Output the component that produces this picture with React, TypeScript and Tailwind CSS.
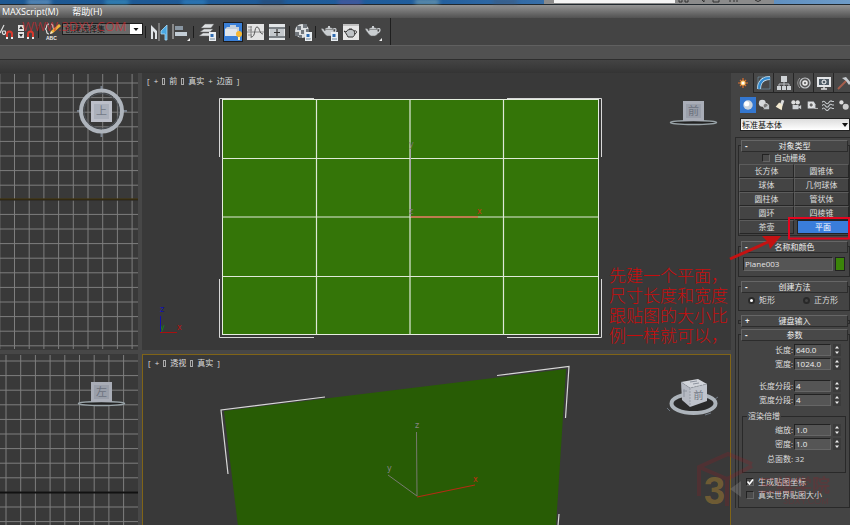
import { useState } from "react";
import type { ReactNode } from "react";

const range = (n: number) => Array.from({ length: n }, (_, i) => i);

/* ---------- toolbar ---------- */

function Tool({ label, children, active = false }: { label: string; children: ReactNode; active?: boolean }) {
  return (
    <button
      aria-label={label}
      className={
        active
          ? "flex h-5 w-5 shrink-0 items-center justify-center border border-[#1c1c1c] bg-[#3a80d8]"
          : "flex h-5 w-5 shrink-0 items-center justify-center"
      }
    >
      <svg viewBox="0 0 18 18" className="h-[18px] w-[18px] shrink-0">
        {children}
      </svg>
    </button>
  );
}

const Sep = () => <span className="mr-[3px] ml-[2px] h-3 w-px shrink-0 bg-[#1d1d1d]" />;

const Corner = () => <path d="M18 15v3h-3z" fill="#eee" />;

const Magnet = () => (
  <>
    <path d="M11 15v-4a2.500 2.500 0 0 1 5 0v4" fill="none" stroke="#d8382c" strokeWidth="2" />
    <path d="M10 14h2v2h-2zM15 14h2v2h-2z" fill="#eee" />
  </>
);

const Teapot = () => (
  <>
    <path d="M5 6c0-2 8-2 8 0 2 3 1 6-2 7H7C5 12 3 9 1 6c2-1 3 0 4 2z" fill="#c9cdd0" stroke="#555" strokeWidth=".5" />
    <path d="M13 6c4-2 4 3 0 4" fill="none" stroke="#c9cdd0" strokeWidth="1.2" />
    <path d="M8 3h2v2H8z" fill="#c9cdd0" />
    <path d="M5 6.500h8" stroke="#666" strokeWidth=".6" />
  </>
);

const Page = () => (
  <>
    <path d="M11 9h7v9h-7z" fill="#e9eef2" />
    <path d="M12.500 11h3v3h-3z" fill="#2f6cb2" />
    <path d="M12 16h5" stroke="#789" />
  </>
);

function Toolbar() {
  return (
    <div className="relative flex h-[27px] items-center bg-[#444]">
      <div className="flex h-full items-center border-r border-[#1f1f1f] pr-[7px]">
        <button aria-label="百分比捕捉" className="h-5 w-[14px] shrink-0">
          <svg viewBox="4 0 14 18" className="h-[18px] w-[14px]">
            <path d="M4 10l4-8M7 8a1.500 2 0 1 0 2 0z" fill="none" stroke="#ddd" strokeWidth="1.200" />
            <Magnet />
          </svg>
        </button>
        <span className="w-[2px]" />
        <Tool label="微调器捕捉">
          <path d="M1 2h6v6H1zM1 9h6v6H1z" fill="#e2e2e2" />
          <path d="M2 6l2-3 2 3zM2 11l2 3 2-3z" fill="#333" />
          <Magnet />
        </Tool>
        <Sep />
        <Tool label="编辑命名选择集">
          <path d="M6 1C2 1 5 6 2 6c3 0 0 5 4 5M8 1c3 0 1 4 3 5" fill="none" stroke="#ddd" strokeWidth="1.200" />
          <path d="M7 11l1-3 8-7 2 2-8 7z" fill="#efb43b" />
          <path d="M7 11l1-3 2 2z" fill="#f5e8cf" />
          <text x="3" y="17" fontSize="5" fontWeight="700" fill="#eee" fontFamily="Liberation Sans, sans-serif">ABC</text>
        </Tool>
        <div className="relative -mt-[5px] h-3 w-[81px] shrink-0 border border-[#1c1c1c] bg-[#6a6a6a]">
          <select
            aria-label="命名选择集"
            className="block h-full w-full appearance-none bg-transparent pl-[2px] text-[8px] leading-[10px] text-[#111] outline-none"
          >
            <option>创建选择集</option>
          </select>
          <svg viewBox="0 0 12 10" className="pointer-events-none absolute top-0 right-0 h-[10px] w-3 bg-white">
            <path d="M3.500 4h5L6 7z" fill="#111" />
          </svg>
        </div>
        <Sep />
        <Tool label="镜像">
          <path d="M1 2l6 6v8H5V10L3 8v8H1z" fill="#dfe3e6" />
          <path d="M9 0v18" stroke="#aaa" />
          <path d="M17 2l-6 6v3h4v6h2z" fill="#4aa8e4" stroke="#a8daf6" strokeWidth=".8" />
        </Tool>
        <span className="w-[2px]" />
        <Tool label="对齐">
          <path d="M1 1v15" stroke="#ccc" />
          <path d="M3 3h8v4H3z" fill="#8996a2" />
          <path d="M3 9h12v4H3z" fill="#c3cdd6" />
          <Corner />
        </Tool>
        <Sep />
        <Tool label="层管理器">
          <path d="M1 13l4-3h9l-3 3zM2 9l4-3h9l-3 3zM3 5l4-4h9l-3 4z" fill="#dde0e2" stroke="#666" strokeWidth=".5" />
          <Page />
        </Tool>
        <Sep />
        <Tool label="石墨建模工具" active>
          <path d="M1 6l2-2h3V2h6v2h3v9H1z" fill="#c4cfda" />
          <path d="M1 6h12v7H1z" fill="#e1e6eb" />
          <circle cx="15" cy="11" r="3" fill="#f7b731" />
          <path d="M14 14h2v3h-2z" fill="#fff2bd" />
        </Tool>
        <span className="w-[2px]" />
        <Tool label="曲线编辑器">
          <path d="M1 1h17v16H1z" fill="#e4e4e4" />
          <path d="M1 9h17M5 3v12M2 4h4M2 7h4M2 12h4" stroke="#777" strokeWidth=".8" />
          <path d="M5 14C10 14 8 4 11 4s2 7 6 7" fill="none" stroke="#555" />
        </Tool>
        <span className="w-[2px]" />
        <Tool label="图解视图">
          <path d="M1 1h16v16H1z" fill="#e2e5e7" />
          <path d="M1 4h16v2H1zM1 13h16v2H1z" fill="#7b8186" />
          <path d="M2 6h14v7H2z" fill="#c4c9cd" />
          <path d="M9 6v7M6 9.500h6" stroke="#333" strokeWidth="1.200" />
        </Tool>
        <Sep />
        <Tool label="材质编辑器">
          <circle cx="8" cy="8" r="7" fill="#dcdfe1" />
          <path d="M3 3h4v4H3zM9 1h4v4H9zM1 9h4v4H1zM7 7h3v4H7zM12 6h3v4h-3zM5 12h3v3H5z" fill="#71777d" />
          <Page />
          <Corner />
        </Tool>
        <Sep />
        <Tool label="渲染设置">
          <Teapot />
          <Page />
        </Tool>
        <span className="w-[2px]" />
        <Tool label="渲染帧窗口">
          <path d="M1 1h16v16H1z" fill="#e6e6e6" />
          <path d="M1 2h16" stroke="#999" />
          <path d="M5 8c0-2 7-2 7 0 2 3 0 5-1 6H6C5 12 4 10 2 8l2 1z" fill="#bfc3c6" stroke="#333" />
          <path d="M12 8c4-1 3 3 0 3M7 6h3" fill="none" stroke="#333" />
        </Tool>
        <span className="w-[2px]" />
        <Tool label="渲染产品">
          <Teapot />
          <Corner />
        </Tool>
      </div>
      <span className="pointer-events-none absolute top-0 left-[22px] text-[13px] leading-4 text-[#d8262c]/65">
        WWW.3DXY.COM
      </span>
    </div>
  );
}

/* ---------- viewports ---------- */

function ViewLabel({ parts }: { parts: string[] }) {
  return (
    <div className="absolute top-[3px] left-[5px] flex gap-1 text-[8px] leading-[10px] text-[#ddd]">
      {parts.map((p, i) =>
        p === "box" ? (
          <span key={i} className="mt-[2px] h-[7px] w-[3px] border border-[#aaa]" />
        ) : (
          <span key={i}>{p}</span>
        ),
      )}
    </div>
  );
}

function FlatCube({ x, y, label }: { x: number; y: number; label: string }) {
  return (
    <g>
      <ellipse cx={x + 10.5} cy={y + 21.5} rx="23" ry="2" fill="#222" stroke="#9aa4a9" strokeWidth="1.500" />
      <rect x={x} y={y} width="21" height="20" fill="#a9adb7" />
      <rect x={x + 3} y={y + 3} width="15" height="14" fill="#9a9faa" />
      <text x={x + 10.5} y={y + 14} fontSize="11" textAnchor="middle" fill="#6c727e">
        {label}
      </text>
    </g>
  );
}

function TopView() {
  return (
    <div className="relative overflow-hidden bg-[#393939]">
      <svg viewBox="0 73 138 277" preserveAspectRatio="xMinYMin slice" className="absolute inset-0 h-full w-full">
        <g stroke="#7e7e7e">
          {range(10).map((i) => (
            <path key={i} d={`M${-0.2 + i * 14.7} 74V349`} />
          ))}
          {range(19).map((i) => (
            <path key={i} d={`M0 ${83 + i * 14.6}H138`} />
          ))}
        </g>
        <path d="M0 199.500H138" stroke="#16130a" strokeWidth="2" />
        <path d="M0 199H138" stroke="#6a571c" strokeWidth=".7" />
        <g stroke="#78818d" strokeWidth="2">
          <path d="M101.500 86v5M101.500 132v5M77 111h5M122 111h5" />
        </g>
        <circle cx="101.500" cy="111" r="20.500" fill="none" stroke="#aeb4bc" strokeWidth="4" />
        <circle cx="101.500" cy="111" r="17.500" fill="none" stroke="#4e545c" />
        <rect x="91" y="101" width="21" height="21" fill="#bcbfc9" />
        <rect x="94" y="104" width="15" height="15" fill="#abb0bb" />
        <text x="101.500" y="115" fontSize="11" textAnchor="middle" fill="#737986">上</text>
      </svg>
    </div>
  );
}

function LeftView() {
  return (
    <div className="relative overflow-hidden bg-[#393939]">
      <svg viewBox="0 354 138 171" preserveAspectRatio="xMinYMin slice" className="absolute inset-0 h-full w-full">
        <g stroke="#7e7e7e">
          {range(9).map((i) => (
            <path key={i} d={`M${6 + i * 14.7} 355V525`} />
          ))}
          {range(12).map((i) => (
            <path key={i} d={`M0 ${361 + i * 14.6}H138`} />
          ))}
        </g>
        <path d="M0 492.500H138" stroke="#111" strokeWidth="2" />
        <FlatCube x={91} y={382} label="左" />
      </svg>
    </div>
  );
}

function FrontView() {
  return (
    <div className="relative overflow-hidden bg-[#393939]">
      <svg viewBox="142 73 589 277" preserveAspectRatio="xMinYMin meet" className="absolute inset-0 h-full w-full">
        <path
          d="M314 98.500H219.500V157M507 98.500H601.500V157M219.500 279V337.500H314M507 337.500H601.500V279"
          fill="none"
          stroke="#d8d8d8"
        />
        <rect x="222.500" y="99.500" width="376" height="235" fill="#347508" stroke="#e6efe0" />
        <path
          d="M316.500 100V335M410 100V335M503.500 100V335M222 158.500H598M222 217H598M222 276.500H598"
          stroke="#dfe9d8"
          strokeWidth="1.200"
        />
        <path d="M410.500 149V217" stroke="#a4a4a4" />
        <path d="M411 217H478" stroke="#cf6a45" strokeWidth="1.500" />
        <g fontSize="8" fontFamily="DejaVu Sans, sans-serif">
          <text x="409" y="147" fill="#777">y</text>
          <text x="409" y="214" fill="#777">z</text>
          <text x="477" y="214" fill="#c93415">x</text>
          <text x="160" y="312" fill="#1010b0">z</text>
          <text x="160" y="330" fill="#128a12">y</text>
          <text x="177" y="330" fill="#b81313">x</text>
        </g>
        <path d="M160.500 316V333" stroke="#1010b0" />
        <path d="M160 332.500H177" stroke="#a81010" />
        <FlatCube x={683} y={101} label="前" />
      </svg>
      <ViewLabel parts={["[", "+", "box", "前", "box", "真实", "+", "边面", "]"]} />
      <p className="absolute right-[2px] bottom-[4px] w-[120px] text-[17px] leading-5 font-light text-[#c80d0d]">
        先建一个平面，
        <br />
        尺寸长度和宽度
        <br />
        跟贴图的大小比
        <br />
        例一样就可以，
      </p>
    </div>
  );
}

function PerspectiveView() {
  return (
    <div className="relative overflow-hidden border border-b-0 border-[#806417] bg-[#393939]">
      <svg viewBox="143 355 587 170" preserveAspectRatio="xMinYMin meet" className="absolute inset-0 h-full w-full">
        <path d="M224 411L566 369L556 526H238Z" fill="#285c05" />
        <path
          d="M325 397L221 410L228 474M497 375.500L569 366.500L565.500 418M559 514L558 526"
          fill="none"
          stroke="#d8d8d8"
          strokeWidth="1.200"
        />
        <path d="M416.500 432L417 496L388 475" fill="none" stroke="#777a70" />
        <path d="M417 497L475 485" stroke="#b52c14" strokeWidth="1.200" />
        <g fontSize="8" fontFamily="DejaVu Sans, sans-serif">
          <text x="415" y="428" fill="#858585">z</text>
          <text x="387" y="471" fill="#858585">y</text>
          <text x="473" y="482" fill="#c62c14">x</text>
        </g>
        <ellipse cx="693.500" cy="403.500" rx="22" ry="9.500" fill="#2b2b2b" stroke="#adb4bb" strokeWidth="4" />
        <path d="M667 408l3 3M705 415l6-2M715 399l3-2" stroke="#6f7883" />
        <path d="M681 382L698 379L707 384L690 388Z" fill="#d2d5db" />
        <path d="M681 382L690 388V407L682 400Z" fill="#b6bac3" />
        <path d="M690 388L707 384V401L690 407Z" fill="#c0c4cc" />
        <path d="M681 382L690 388L707 384M690 388V407" fill="none" stroke="#8a9099" strokeDasharray="2 1" strokeWidth=".7" />
        <path d="M684 389v8M683 391h4M690 382l7-1M693 384l6-1" stroke="#8d939e" />
        <text x="698.500" y="399" fontSize="10" textAnchor="middle" fill="#737986">前</text>
      </svg>
      <ViewLabel parts={["[", "+", "box", "透视", "box", "真实", "]"]} />
    </div>
  );
}

/* ---------- command panel ---------- */

function Rollout({ title, open = true, children, className = "" }: { title: string; open?: boolean; children?: ReactNode; className?: string }) {
  return (
    <section className={`border border-[#292929] ${className}`}>
      <button
        className={
          (open ? "" : "-mb-1 ") +
          "relative mx-[2px] -mt-[6px] flex h-3 w-[107px] items-center justify-center border border-[#666] border-r-[#2c2c2c] border-b-[#2c2c2c] bg-[#484848] text-[8px] leading-[10px] text-[#eee]"
        }
      >
        <span className="absolute left-[3px] font-bold">{open ? "-" : "+"}</span>
        {title}
      </button>
      {children}
    </section>
  );
}

function Spin({ label, id, value, inset = false }: { label: string; id: string; value: string; inset?: boolean }) {
  return (
    <div className="flex h-[14px] items-center">
      <label htmlFor={id} className={inset ? "w-[50px] shrink-0 text-right" : "w-[54px] shrink-0 text-right"}>
        {label}:
      </label>
      <input
        id={id}
        defaultValue={value}
        className="ml-px h-3 w-[37px] shrink-0 border border-[#222] border-r-[#666] border-b-[#666] bg-[#555] pb-px pl-px text-[8px] leading-[9px] text-[#eee] outline-none"
      />
      <div className="ml-[2px] flex h-3 w-2 flex-col bg-[#3b3b3b]">
        <button aria-label={`${label} +`} className="flex flex-1 items-center justify-center">
          <svg viewBox="0 0 6 4" className="h-1 w-[6px]"><path d="M1 3.500L3 1l2 2.500z" fill="#eee" /></svg>
        </button>
        <button aria-label={`${label} -`} className="flex flex-1 items-center justify-center">
          <svg viewBox="0 0 6 4" className="h-1 w-[6px]"><path d="M1 .5L3 3 5 .5z" fill="#eee" /></svg>
        </button>
      </div>
    </div>
  );
}

function Check({ label, checked = false }: { label: string; checked?: boolean }) {
  return (
    <label className="flex h-[13px] items-center gap-1">
      <span className="relative flex h-2 w-2">
        <input
          type="checkbox"
          defaultChecked={checked}
          className="peer h-2 w-2 appearance-none border border-[#222] border-r-[#666] border-b-[#666] bg-[#4b4b4b]"
        />
        <svg viewBox="0 0 8 8" className="pointer-events-none absolute inset-0 hidden h-2 w-2 peer-checked:block">
          <path d="M1.500 3.500l2 2.500L7 1.500" fill="none" stroke="#fff" strokeWidth="1.600" />
        </svg>
      </span>
      {label}
    </label>
  );
}

const tabs: { name: string; icon: ReactNode }[] = [
  {
    name: "创建",
    icon: (
      <>
        <path d="M7 2v10M2 7h10M4 4l6 6M10 4l-6 6" stroke="#e0702c" strokeWidth="1.200" />
        <circle cx="7" cy="7" r="2.500" fill="#ffc45c" />
        <circle cx="7" cy="7" r="1.500" fill="#fff" />
      </>
    ),
  },
  {
    name: "修改",
    icon: (
      <>
        <path d="M2 13C2 6 6 2 13 2" fill="none" stroke="#d8ecf8" strokeWidth="4" />
        <path d="M2 13C2 6 6 2 13 2" fill="none" stroke="#3189cf" strokeWidth="2.500" />
        <path d="M1 1h12v12H1z" fill="none" stroke="#7fa8c4" strokeWidth=".5" />
      </>
    ),
  },
  {
    name: "层次",
    icon: (
      <>
        <path d="M4 0h6v6H4zM0 10h4v4H0zM5 10h4v4H5zM10 10h4v4h-4z" fill="#cfd3d6" />
        <path d="M7 6v4M2 10V8h10v2" fill="none" stroke="#b9bcc0" />
      </>
    ),
  },
  {
    name: "运动",
    icon: (
      <>
        <circle cx="8" cy="7" r="5" fill="#555" stroke="#c4c7ca" strokeWidth="1.200" />
        <circle cx="8" cy="7" r="2" fill="#777" stroke="#eee" strokeWidth="1.500" />
        <path d="M3 2C0 5 0 9 3 12" fill="none" stroke="#999" />
      </>
    ),
  },
  {
    name: "显示",
    icon: (
      <>
        <path d="M0 1h14v10H0z" fill="#e4e6e8" />
        <path d="M2 3h10v6H2z" fill="#505c66" />
        <circle cx="7" cy="6" r="2" fill="none" stroke="#fff" />
        <path d="M4 13h6M7 11v2" stroke="#ddd" strokeWidth="1.500" />
      </>
    ),
  },
  {
    name: "实用程序",
    icon: (
      <>
        <path d="M1 13L10 4" stroke="#a55e4c" strokeWidth="2" />
        <path d="M5 2l4-1 5 6-2 2-3-4z" fill="#c6cbcf" />
      </>
    ),
  },
];

const kinds: { name: string; icon: ReactNode }[] = [
  {
    name: "几何体",
    icon: (
      <>
        <circle cx="7" cy="7" r="5.500" fill="#cad3dd" />
        <circle cx="5.500" cy="5.500" r="3" fill="#fff" />
      </>
    ),
  },
  {
    name: "图形",
    icon: (
      <>
        <circle cx="5" cy="5" r="4" fill="#d7dadd" />
        <circle cx="9" cy="8" r="3" fill="#777" stroke="#ddd" />
        <path d="M6 12h7V6z" fill="#bfc4c8" />
      </>
    ),
  },
  {
    name: "灯光",
    icon: (
      <>
        <path d="M9 1l3 1-2 6-3-2z" fill="#ddd" />
        <path d="M6 4l4 3-1 6-7-4z" fill="#f4ead0" />
      </>
    ),
  },
  {
    name: "摄影机",
    icon: (
      <>
        <circle cx="4" cy="4" r="2.500" fill="#ddd" />
        <circle cx="9" cy="4" r="2.500" fill="#ddd" />
        <path d="M3 7h7v5H3zM10 9l3-2v5l-3-2zM1 8l2 1" fill="#d0d3d6" />
      </>
    ),
  },
  {
    name: "辅助对象",
    icon: (
      <>
        <path d="M2 3h7l2 3v5H2z" fill="#d5d8db" />
        <circle cx="6" cy="7" r="2.500" fill="#666" stroke="#fff" />
        <path d="M10 11h4" stroke="#ccc" />
      </>
    ),
  },
  {
    name: "空间扭曲",
    icon: (
      <path
        d="M0 4q2-3 4 0t4 0 4-1l2 0M0 8q2-3 4 0t4 0 4-1l2 0M0 12q2-3 4 0t4 0 4-1l2 0"
        fill="none"
        stroke="#c4c8cb"
        strokeWidth="1.200"
      />
    ),
  },
  {
    name: "系统",
    icon: (
      <>
        <circle cx="4" cy="4" r="2.500" fill="#ddd" />
        <circle cx="9" cy="9" r="3.500" fill="#ccc" />
      </>
    ),
  },
];

const objects = ["长方体", "圆锥体", "球体", "几何球体", "圆柱体", "管状体", "圆环", "四棱锥", "茶壶", "平面"];

function CommandPanel() {
  const [picked, setPicked] = useState("平面");
  return (
    <aside className="relative w-[119px] shrink-0 overflow-visible bg-[#444] text-[8px] leading-[10px] text-[#ddd]">
      <div className="overflow-hidden pl-[2px]">
        <div className="flex h-5 bg-[#383838]">
          {tabs.map((t, i) => (
            <button
              key={t.name}
              aria-label={t.name}
              className={
                i === 0
                  ? "flex w-5 shrink-0 items-center justify-center bg-[#444]"
                  : "flex w-5 shrink-0 items-center justify-center border-l border-b border-[#252525] bg-[#484848]"
              }
            >
              <svg viewBox="0 0 14 14" className="h-[14px] w-[14px]">{t.icon}</svg>
            </button>
          ))}
        </div>
        <div className="mt-1 flex pl-[7px]">
          {kinds.map((k, i) => (
            <button
              key={k.name}
              aria-label={k.name}
              className={
                i === 0
                  ? "flex h-4 w-4 shrink-0 items-center justify-center bg-[#3477d0]"
                  : "flex h-4 w-4 shrink-0 items-center justify-center"
              }
            >
              <svg viewBox="0 0 14 14" className="h-3 w-3">{k.icon}</svg>
            </button>
          ))}
        </div>
        <div className="relative mt-[5px] ml-[7px] h-[13px] border border-[#222] bg-linear-to-b from-[#ddd] to-white">
          <select
            aria-label="对象类别"
            className="block h-full w-full appearance-none bg-transparent pl-px text-[8px] leading-[11px] text-[#111] outline-none"
          >
            <option>标准基本体</option>
          </select>
          <svg viewBox="0 0 6 4" className="pointer-events-none absolute top-1 right-px h-1 w-[6px]">
            <path d="M0 0h6L3 4z" fill="#111" />
          </svg>
        </div>
      </div>

      <div className="mt-[6px] ml-1 border-t border-l border-[#2b2b2b] pt-[7px] pl-[2px]">
        <Rollout title="对象类型">
          <div className="flex h-3 items-center pl-[23px]">
            <Check label="自动栅格" />
          </div>
          <div className="grid grid-cols-2 pb-px">
            {objects.map((o) => (
              <button
                key={o}
                onClick={() => setPicked(o)}
                className={
                  o === picked
                    ? "ml-[3px] h-[14px] border border-[#222] bg-[#3a7ddb] text-[8px] leading-3 text-white"
                    : "h-[14px] border border-[#5c5c5c] border-r-[#262626] border-b-[#262626] text-[8px] leading-3"
                }
              >
                {o}
              </button>
            ))}
          </div>
        </Rollout>

        <Rollout title="名称和颜色" className="mt-[10px]">
          <div className="mt-1 flex gap-[2px] px-1 pb-[5px]">
            <input
              aria-label="名称"
              defaultValue="Plane003"
              className="h-[14px] w-[90px] border border-[#222] border-r-[#666] border-b-[#666] bg-[#555] pb-[2px] pl-px text-[8px] leading-[10px] text-[#e4e4e4] outline-none"
            />
            <button aria-label="颜色" className="h-[14px] w-3 border border-[#222] bg-[#3b8409]" />
          </div>
        </Rollout>

        <Rollout title="创建方法" className="mt-[9px]">
          <div className="mb-[3px] flex h-[14px] items-center pl-[9px]">
            {["矩形", "正方形"].map((r, i) => (
              <label key={r} className="flex w-[55px] shrink-0 items-center gap-1">
                <input
                  type="radio"
                  name="method"
                  defaultChecked={i === 0}
                  className="h-[7px] w-[7px] appearance-none rounded-full border-2 border-[#292929] bg-[#444] checked:bg-white"
                />
                {r}
              </label>
            ))}
          </div>
        </Rollout>

        <Rollout title="键盘输入" open={false} className="mt-[9px]" />

        <Rollout title="参数" className="mt-[10px]">
          <div className="pt-[2px]">
            <Spin id="len" label="长度" value="640.0" />
            <Spin id="wid" label="宽度" value="1024.0" />
          </div>
          <div className="pt-2">
            <Spin id="lseg" label="长度分段" value="4" />
            <Spin id="wseg" label="宽度分段" value="4" />
          </div>
          <fieldset className="mx-[3px] mt-1 border border-[#292929] pb-[6px]">
            <legend className="ml-1 h-[10px] px-px">渲染倍增</legend>
            <div className="pt-[2px]">
              <Spin id="scale" label="缩放" value="1.0" inset />
              <Spin id="dens" label="密度" value="1.0" inset />
              <div className="flex h-[15px] items-center gap-[2px] pl-6">
                <span>总面数:</span>
                <span>32</span>
              </div>
            </div>
          </fieldset>
          <div className="pt-[2px] pb-[6px] pl-[7px]">
            <Check label="生成贴图坐标" checked />
            <Check label="真实世界贴图大小" />
          </div>
        </Rollout>
      </div>

      {/* red call-out frame and arrow over the plane button */}
      <svg viewBox="731 73 119 452" className="pointer-events-none absolute top-0 left-0 h-[452px] w-[119px] overflow-visible">
        <rect x="789" y="218" width="60" height="20.500" fill="none" stroke="#e3051f" strokeWidth="2" />
        <path d="M730 259L768 242" stroke="#c41212" strokeWidth="3" />
        <path d="M762 236L781 236L770 249L768 242Z" fill="#c41212" />
        <g opacity=".22">
          <path d="M699 496V467L728 454L752 464M699 467L727 479V506M727 479L752 466" fill="none" stroke="#a01822" strokeWidth="4" />
          <text x="758" y="492" fontSize="18" fontWeight="700" fill="#a01822">三维学院</text>
          <text x="783" y="504" fontSize="9" fill="#a01822" fontFamily="Liberation Sans, sans-serif">3DXY.COM</text>
        </g>
        <text x="704" y="504" fontSize="38" fontWeight="700" fill="#c8962e" fillOpacity=".4" fontFamily="Liberation Sans, sans-serif">3</text>
        <path d="M730 489l11-8v16z" fill="#aaa" opacity=".25" />
      </svg>
    </aside>
  );
}

export default function App() {
  return (
    <div className="flex h-screen flex-col overflow-hidden bg-[#444] font-['Open_Sans','Noto_Sans_CJK_SC',sans-serif] text-[#ddd]">
      <div className="relative flex h-[5px] shrink-0 border-b border-[#20282e] bg-linear-to-r from-[#1d5791] via-[#205d9c] to-[#6d9bc8]">
        <div className="flex w-[64%] justify-around">
          {["bg-[#9fc6e4]", "bg-[#4ab1d9]", "bg-[#3b9bdc]", "bg-[#31405b]", "bg-[#6d53a0]", "bg-[#a8c7bb]", "bg-[#46536a]"].map((c) => (
            <span key={c} className={`h-1 w-6 opacity-60 blur-[2px] ${c}`} />
          ))}
        </div>
        <div className="flex w-[27%] bg-[#8b8b8b] pl-[10px]">
          <div className="h-[3px] w-[121px] bg-[#f4f4f4]" />
          <svg viewBox="0 0 90 4" className="h-1 w-[90px]">
            <path d="M4 0v2h3V0M10 0v2h3V0M27 0l2 2V0M38 0v2h6V0M55 0v2M59 0v2M62 0v2M80 0q3 3 6 0" fill="none" stroke="#333" />
          </svg>
        </div>
      </div>
      <nav className="flex h-[13px] shrink-0 items-center gap-[14px] bg-linear-to-b from-[#949494] to-[#525252] pl-[2px] text-[9px] leading-3 text-white">
        <button>MAXScript(M)</button>
        <button>帮助(H)</button>
      </nav>
      <Toolbar />
      <div className="h-[14px] shrink-0 border-t border-[#606060] bg-[#515151]" />
      <div className="h-[14px] shrink-0 border-t border-[#2e2e2e] bg-linear-to-b from-[#444] to-[#343434]" />
      <div className="flex min-h-0 flex-1">
        <main className="grid min-w-0 flex-1 grid-cols-[138px_minmax(0,1fr)] grid-rows-[277fr_171fr] gap-1 bg-[#474747]">
          <TopView />
          <FrontView />
          <LeftView />
          <PerspectiveView />
        </main>
        <CommandPanel />
      </div>
    </div>
  );
}
